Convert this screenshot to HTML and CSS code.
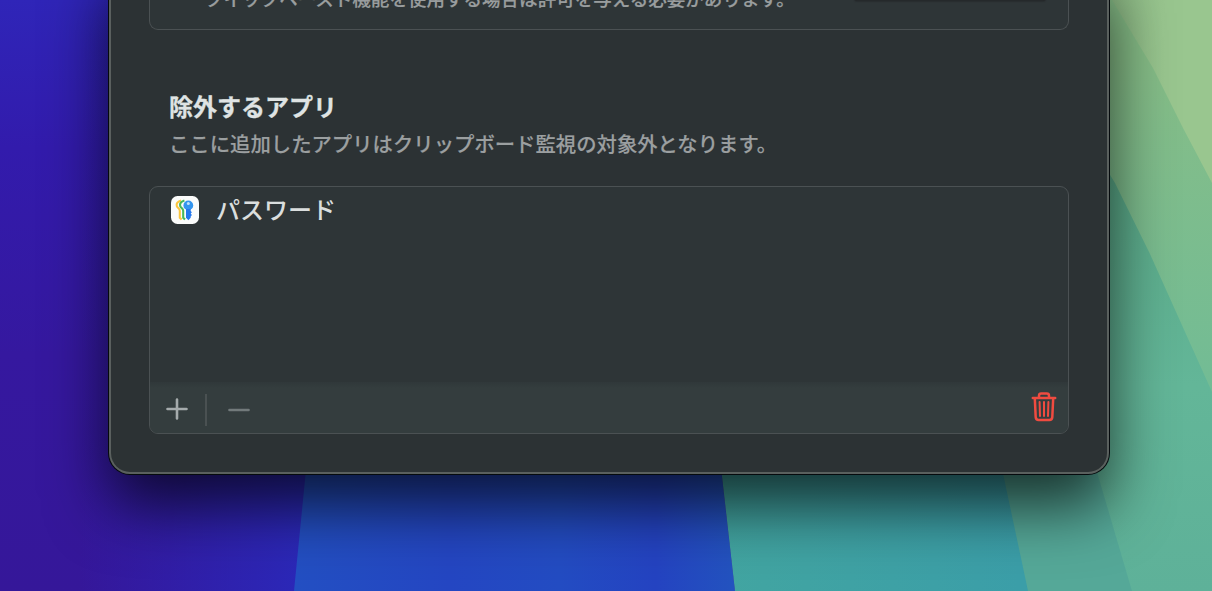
FILE: index.html
```html
<!DOCTYPE html>
<html lang="ja">
<head>
<meta charset="utf-8">
<title>除外するアプリ</title>
<link rel="stylesheet" href="styles.css">
</head>
<body>
<div class="desktop">
  <svg class="wallpaper" viewBox="0 0 1212 591" preserveAspectRatio="none" aria-hidden="true">
    <defs>
      <linearGradient id="violet" x1="0" y1="0" x2="0" y2="1">
        <stop offset="0" stop-color="#2f25b8"/><stop offset=".25" stop-color="#321bac"/><stop offset=".6" stop-color="#35189f"/><stop offset="1" stop-color="#351799"/>
      </linearGradient>
      <linearGradient id="indigo" gradientUnits="userSpaceOnUse" x1="80" y1="0" x2="300" y2="0">
        <stop offset="0" stop-color="#2b25b8" stop-opacity="0"/><stop offset="1" stop-color="#2b28b8"/>
      </linearGradient>
      <linearGradient id="teal" gradientUnits="userSpaceOnUse" x1="722" y1="0" x2="1020" y2="0">
        <stop offset="0" stop-color="#42a5a1"/><stop offset="1" stop-color="#3b9ea8"/>
      </linearGradient>
      <linearGradient id="mint" gradientUnits="userSpaceOnUse" x1="0" y1="180" x2="0" y2="591">
        <stop offset="0" stop-color="#5bab89"/><stop offset=".5" stop-color="#63b698"/><stop offset="1" stop-color="#5eb199"/>
      </linearGradient>
      <linearGradient id="leaf" gradientUnits="userSpaceOnUse" x1="0" y1="60" x2="0" y2="390">
        <stop offset="0" stop-color="#86bd87"/><stop offset="1" stop-color="#72bc95"/>
      </linearGradient>
      <linearGradient id="blue" gradientUnits="userSpaceOnUse" x1="295" y1="0" x2="735" y2="0">
        <stop offset="0" stop-color="#234fc2"/><stop offset=".35" stop-color="#2446c2"/><stop offset=".6" stop-color="#234cc2"/><stop offset=".82" stop-color="#2443c1"/><stop offset="1" stop-color="#2353bf"/>
      </linearGradient>
      <linearGradient id="lime" gradientUnits="userSpaceOnUse" x1="1108" y1="0" x2="1165" y2="0">
        <stop offset="0" stop-color="#8dbb86"/><stop offset="1" stop-color="#99c68f"/>
      </linearGradient>
    </defs>
    <path fill="url(#violet)" d="M0 0h400v591H0z"/>
    <path fill="url(#indigo)" d="M0 0h400v591H0z"/>
    <path fill="url(#blue)" d="M307 460h413l15 131H294z"/>
    <path fill="url(#teal)" d="M719 450h320v141H735z"/>
    <path fill="#55a898" d="M998 450h110l30 141H1028z"/>
    <path fill="url(#mint)" d="M1086 100h126v491h-80L1092 455z"/>
    <path fill="url(#leaf)" d="M1090 0h122v392L1150 254 1115 183 1090 142z"/>
    <path fill="url(#lime)" d="M1112 0h100v183L1183 128 1153 68z"/>
  </svg>

  <main class="window">
    <section class="permission">
      <p class="permission-text">クイックペースト機能を使用する場合は許可を与える必要があります。</p>
      <div class="permission-button"></div>
    </section>

    <header class="heading">
      <h1>除外するアプリ</h1>
      <p>ここに追加したアプリはクリップボード監視の対象外となります。</p>
    </header>

    <section class="app-list">
      <ul class="rows">
        <li class="row">
          <svg class="app-icon" viewBox="0 0 28 28" aria-hidden="true">
            <rect width="28" height="28" rx="6.5" fill="#fbfcfb"/>
            <g fill="none" stroke-width="2.1" stroke-linejoin="round">
              <path stroke="#fbc63d" d="M10 4.6C6.8 5.6 5.1 7.4 5.8 10c.5 1.8 3 2.7 3 4.7v7l1.8 1.8"/>
              <path stroke="#46b85b" d="M13.4 4.6C10.2 5.6 8.5 7.4 9.2 10c.5 1.8 3 2.7 3 4.7v7l1.8 1.8"/>
            </g>
            <circle cx="17.3" cy="9.4" r="4.9" fill="#3395ee"/>
            <path fill="#2478ed" d="M15 13h4.7v2l1.2 1.2-1.2 1.4 1.2 1.5-1.2 1.4v1.2l-2.3 2.5-2.4-2.5z"/>
            <circle cx="17.3" cy="7.5" r="1.5" fill="#b9e1fb"/>
          </svg>
          <span>パスワード</span>
        </li>
      </ul>
      <footer class="toolbar">
        <svg class="add" viewBox="0 0 22 22" aria-hidden="true"><path d="M11 1.5v19M1.5 11h19"/></svg>
        <span class="divider"></span>
        <svg class="remove" viewBox="0 0 22 22" aria-hidden="true"><path d="M1.5 11h19"/></svg>
        <svg class="trash" viewBox="0 0 26 30" aria-hidden="true">
          <path d="M1.8 6h22.4M8 5.6V3.7Q8 1.5 10.2 1.5h5.6Q18 1.5 18 3.7v1.9M3.8 6.3l.9 18.8Q4.9 28 7.6 28h10.8q2.7 0 2.9-2.9l.9-18.8"/>
          <path class="ribs" d="M8.6 10l.4 14M13 10v14M17.4 10l-.4 14"/>
        </svg>
      </footer>
    </section>
  </main>
</div>
</body>
</html>
```
FILE: styles.css
```css
* {
  box-sizing: border-box;
}

body {
  margin: 0;
  overflow: hidden;
  font-family: "Noto Sans CJK JP", sans-serif;
}

.desktop {
  position: relative;
  width: 1212px;
  height: 591px;
  overflow: hidden;
  background: #36179d;
}

.wallpaper {
  position: absolute;
  inset: 0;
  width: 100%;
  height: 100%;
}

.window {
  position: relative;
  width: 1000px;
  height: 514px;
  margin: -40px 0 0 109px;
  padding: 38px 38px 0 38px;
  display: flex;
  flex-direction: column;
  border: 2px solid #5a605e;
  border-top: 0;
  border-radius: 0 0 21px 21px;
  background: #2c3234;
  box-shadow: 0 0 0 1px #050a0d, 0 32px 62px rgba(0, 0, 0, .7);
}

.permission {
  flex: none;
  height: 32px;
  display: flex;
  justify-content: space-between;
  padding: 0 22px 0 55px;
  border: 1px solid #4b5153;
  border-top: 0;
  border-radius: 0 0 9px 9px;
  background: #2e3537;
}

.permission-text {
  margin: -14px 0 0;
  font-size: 18.55px;
  line-height: 27px;
  font-weight: 500;
  color: #999d9e;
  -webkit-text-stroke: .2px #999d9e;
  white-space: nowrap;
}

.permission-button {
  width: 192px;
  height: 3px;
  border-radius: 0 0 6px 6px;
  background: #25292b;
  box-shadow: 0 1px 1px #282d2f;
}

.heading {
  flex: none;
  height: 156px;
  padding: 58px 0 0 20px;
}

.heading h1 {
  margin: 0;
  font-size: 24px;
  line-height: 36px;
  font-weight: 700;
  color: #dfe3e3;
  -webkit-text-stroke: .3px #dfe3e3;
}

.heading p {
  margin: 4px 0 0;
  font-size: 20.36px;
  line-height: 30px;
  font-weight: 500;
  color: #9b9fa0;
  -webkit-text-stroke: .15px #9b9fa0;
  white-space: nowrap;
}

.app-list {
  flex: none;
  height: 248px;
  display: flex;
  flex-direction: column;
  overflow: hidden;
  border: 1px solid #4b5153;
  border-radius: 9px;
  background: #2e3537;
}

.rows {
  flex: 1;
  margin: 0;
  padding: 4px 20px 4px 21px;
  list-style: none;
}

.row {
  height: 37px;
  display: flex;
  align-items: center;
  gap: 18px;
  font-size: 24px;
  line-height: 36px;
  font-weight: 500;
  color: #dadede;
}

.row span {
  margin: -1px 0 0 -1px;
}

.app-icon {
  width: 28px;
  height: 28px;
}

.toolbar {
  height: 51px;
  display: flex;
  align-items: center;
  padding: 0 11px 0 15.5px;
  background: linear-gradient(#30383a, #343d3e 6px);
}

.toolbar svg {
  fill: none;
  stroke-linecap: round;
  stroke-linejoin: round;
}

.add {
  width: 22px;
  height: 22px;
  margin-top: 2px;
  stroke: #a5abac;
  stroke-width: 2.6;
}

.divider {
  width: 2px;
  height: 32px;
  margin: 4px 20.5px 0 17.5px;
  background: #4a5152;
}

.remove {
  width: 22px;
  height: 22px;
  margin-top: 4px;
  stroke: #727a7b;
  stroke-width: 2.6;
}

.trash {
  width: 26px;
  height: 30px;
  margin: -1px 0 0 auto;
  stroke: #f04b40;
  stroke-width: 2.5;
}

.trash .ribs {
  stroke-width: 2;
}
```
